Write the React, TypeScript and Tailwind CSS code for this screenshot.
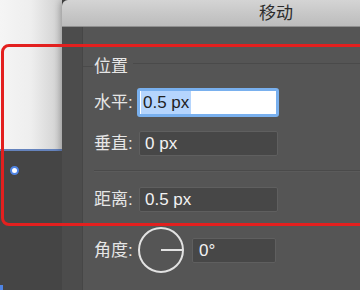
import React from 'react';

const font = { fontFamily: '"Liberation Sans", "Noto Sans CJK SC", sans-serif' };

function Field({ label, value }: { label: string; value: string }) {
  return (
    <div className="flex items-center h-[25px]">
      <span className="w-[45px] text-[17px] text-[#e6e6e6] leading-none">{label}</span>
      <div className="w-[139px] h-[25px] bg-[#474747] border border-[#5f5f5f] rounded-[2px] flex items-center pl-[5px] text-[17px] text-[#f2f2f2] leading-none">
        {value}
      </div>
    </div>
  );
}

export default function App() {
  return (
    <div className="relative w-[360px] h-[290px] overflow-hidden flex bg-[#454545]" style={font}>
      {/* canvas strip */}
      <div className="w-[62px] shrink-0 flex flex-col">
        <div className="h-[149px] bg-gradient-to-r from-[#f5f5f5] via-[#eeeeee] to-[#cfcfcf]" />
        <div className="h-[2px] bg-[#6583bd]" />
        <div className="flex-1 bg-[#454545] pl-[10px] pt-[15px] relative">
          <div className="w-[9px] h-[9px] rounded-full border-[2.5px] border-[#4f84e4] bg-white" />
          <div className="absolute left-0 bottom-0 w-[3px] h-[5px] bg-[#4f84e4]" />
        </div>
      </div>

      {/* dialog */}
      <div className="w-[428px] shrink-0 flex flex-col rounded-tl-[6px] overflow-hidden shadow-[-2px_0_6px_rgba(0,0,0,0.25)]">
        <div className="h-[27px] bg-gradient-to-b from-[#d4d4d4] to-[#bcbcbc] border-b border-[#8f8f8f] flex items-center justify-center text-[17px] text-[#2b2b2b] leading-none">
          移动
        </div>
        <div className="flex-1 flex bg-[#555555]">
          <div className="w-[21px] bg-[#4c4c4c] border-r border-[#464646]" />
          <div className="flex-1 flex flex-col">
            <div className="h-[29px]" />
            {/* legend */}
            <div className="flex items-center h-[20px]">
              <div className="w-[10px] h-px bg-[#4a4a4a]" />
              <span className="px-[1px] text-[17px] text-[#e6e6e6] leading-none">位置</span>
              <div className="flex-1 h-px bg-[#4a4a4a] ml-[4px] mt-[-6px]" />
            </div>

            <div className="pl-[11px] flex flex-col">
              {/* 水平 (focused) */}
              <div className="flex items-center h-[29px] mt-[12px]">
                <span className="w-[43px] text-[17px] text-[#e6e6e6] leading-none">水平:</span>
                <div className="w-[142px] h-[29px] bg-white border-[3px] border-[#79b0ee] rounded-[3px] flex items-center pl-[1px]">
                  <span className="bg-[#b5d5fd] text-[17px] text-[#222] leading-[23px] px-[2px]">0.5 px</span>
                </div>
              </div>

              <div className="mt-[14px]">
                <Field label="垂直:" value="0 px" />
              </div>

              <div className="mt-[14px] flex flex-col">
                <div className="h-px bg-[#4a4a4a]" />
                <div className="h-px bg-[#5b5b5b]" />
              </div>

              <div className="mt-[15px]">
                <Field label="距离:" value="0.5 px" />
              </div>

              {/* 角度 */}
              <div className="flex items-center h-[48px] mt-[14px]">
                <span className="w-[43px] text-[17px] text-[#e6e6e6] leading-none">角度:</span>
                <svg width="48" height="48" viewBox="0 0 48 48" className="shrink-0">
                  <circle cx="24" cy="24" r="22" fill="none" stroke="#e2e2e2" strokeWidth="2" />
                  <line x1="24" y1="24" x2="45" y2="24" stroke="#e2e2e2" strokeWidth="2" />
                </svg>
                <div className="ml-[7px] w-[84px] h-[25px] bg-[#474747] border border-[#5f5f5f] rounded-[2px] flex items-center pl-[6px] text-[17px] text-[#f2f2f2] leading-none">
                  0°
                </div>
              </div>
            </div>
          </div>
        </div>
      </div>

      {/* highlight frame */}
      <div className="absolute left-[1px] top-[44px] w-[400px] h-[182px] border-[3px] border-[#e3201f] rounded-[8px] pointer-events-none" />
    </div>
  );
}
